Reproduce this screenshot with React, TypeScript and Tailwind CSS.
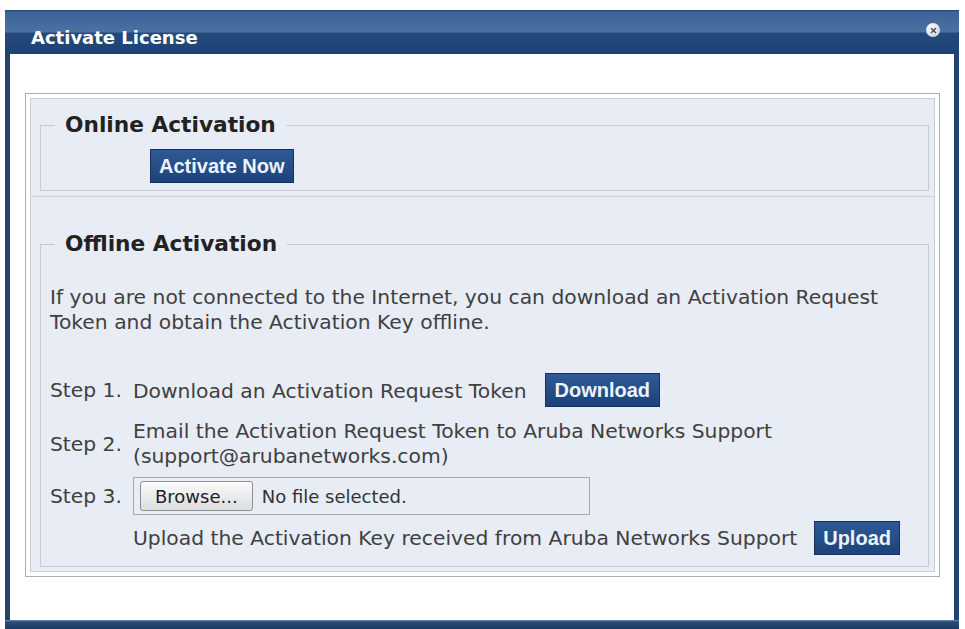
import React from 'react';

const blueButton =
  "h-[34px] border border-[#13325e] bg-[linear-gradient(to_bottom,#2f5a94,#1c437a)] font-['Liberation_Sans',Arial,sans-serif] text-[20px] font-bold leading-none text-[#eef3fb]";

function Section({ title, children, className }: { title: string; children: React.ReactNode; className?: string }) {
  return (
    <fieldset className={`border border-[#c6ccd6] ${className ?? ''}`}>
      <legend className="ml-[14px] px-[10px] text-[21.7px] font-bold leading-[26px] text-[#222]">{title}</legend>
      {children}
    </fieldset>
  );
}

function StepRow({ label, children, className }: { label: string; children: React.ReactNode; className?: string }) {
  return (
    <div className={`flex items-center ${className ?? ''}`}>
      <div className="w-[83px] shrink-0">{label}</div>
      <div className="flex-1">{children}</div>
    </div>
  );
}

export default function App() {
  return (
    <div className="h-[629px] w-[965px] overflow-hidden bg-white pl-[5px] pt-[10px] font-['DejaVu_Sans',Verdana,sans-serif]">
      <div className="flex h-[619px] w-[954px] flex-col bg-[#23446e]">
        {/* title bar */}
        <div className="flex h-[44px] shrink-0 items-center justify-between bg-[linear-gradient(to_bottom,#22426f_0px,#3c6397_2px,#4b72a4_22px,#244a7c_23px,#1d4174_44px)] pl-[26px] pr-[19px]">
          <span className="mt-[10px] text-[18px] font-bold text-white">Activate License</span>
          <span className="mb-[4px] flex h-[14px] w-[14px] items-center justify-center rounded-full bg-[radial-gradient(circle_at_40%_35%,#ffffff,#c3cad5)]">
            <svg width="7" height="7" viewBox="0 0 7 7">
              <path d="M1 1L6 6M6 1L1 6" stroke="#4a5160" strokeWidth="1.6" />
            </svg>
          </span>
        </div>

        {/* dialog body */}
        <div className="mx-[5px] flex-1 bg-white pl-[15px] pr-[14px] pt-[39px]">
          <div className="h-[484px] border border-[#a9aeb7] bg-white p-[4px]">
            <div className="h-full border border-[#c8cdd6] bg-[#e8ecf5] text-[20.3px] leading-[25px] text-[#404040]">
              <div className="border-b border-[#ccd1da] pb-[5px] pl-[9px] pr-[5px] pt-[13px]">
                <Section title="Online Activation" className="pb-[7px]">
                  <button className={`${blueButton} ml-[109px] mt-[11px] px-[8px]`}>Activate Now</button>
                </Section>
              </div>

              <div className="pb-[5px] pl-[9px] pr-[5px] pt-[34px]">
                <Section title="Offline Activation" className="pb-[11px]">
                  <div className="pl-[9px]">
                    <p className="mt-[28px]">
                      If you are not connected to the Internet, you can download an Activation Request
                      <br />
                      Token and obtain the Activation Key offline.
                    </p>

                    <StepRow label="Step 1." className="mt-[38px] h-[34px]">
                      <div className="flex items-center">
                        <span className="mt-[3px]">Download an Activation Request Token</span>
                        <button className={`${blueButton} ml-[18px] px-[9px]`}>Download</button>
                      </div>
                    </StepRow>

                    <StepRow label="Step 2." className="mt-[12px]">
                      Email the Activation Request Token to Aruba Networks Support
                      <br />
                      (support@arubanetworks.com)
                    </StepRow>

                    <StepRow label="Step 3." className="mt-[8px]">
                      <div className="flex h-[38px] w-[457px] items-center border border-[#a6a9ae] pl-[6px] text-[18px]">
                        <span className="flex h-[30px] items-center rounded-[3px] border border-[#8c8f94] bg-[linear-gradient(to_bottom,#fbfbfb,#dcdde0)] px-[14px] text-[#222] shadow-[inset_0_1px_0_#fff]">
                          Browse...
                        </span>
                        <span className="ml-[9px] text-[#333]">No file selected.</span>
                      </div>
                    </StepRow>

                    <div className="ml-[83px] mt-[6px] flex items-center">
                      <span>Upload the Activation Key received from Aruba Networks Support</span>
                      <button className={`${blueButton} ml-[17px] px-[8px]`}>Upload</button>
                    </div>
                  </div>
                </Section>
              </div>
            </div>
          </div>
        </div>

        {/* bottom edge */}
        <div className="h-[9px] shrink-0 bg-[linear-gradient(to_bottom,#6f8bb1_0px,#2b4b77_2px,#1c3a64_9px)]" />
      </div>
    </div>
  );
}
